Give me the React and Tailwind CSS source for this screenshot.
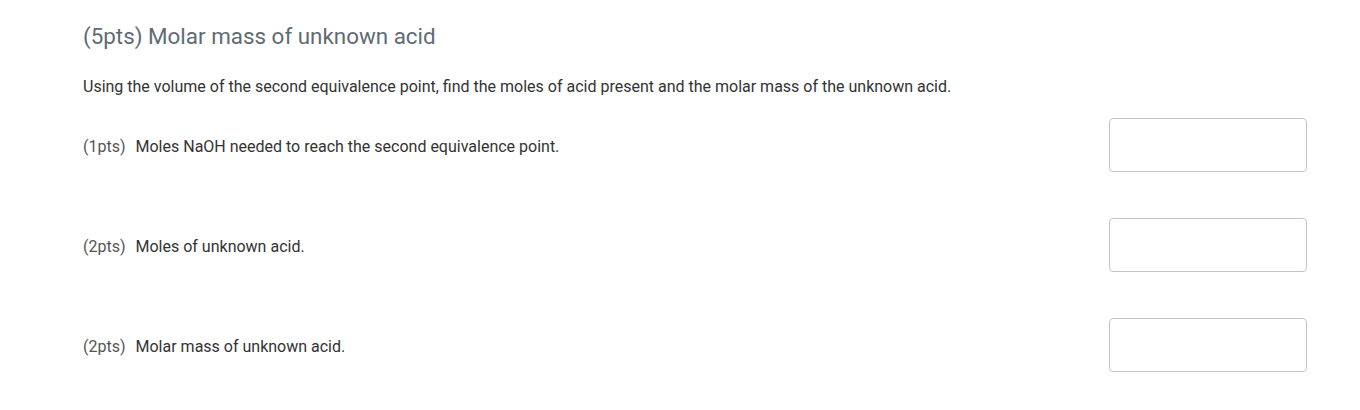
const rows = [
  { pts: "(1pts)", text: "Moles NaOH needed to reach the second equivalence point." },
  { pts: "(2pts)", text: "Moles of unknown acid." },
  { pts: "(2pts)", text: "Molar mass of unknown acid." },
];

export default function App() {
  return (
    <div
      className="bg-white min-h-[410px] pl-[83px] pr-[53px] pt-[21px]"
      style={{ fontFamily: "Roboto, 'Liberation Sans', sans-serif" }}
    >
      <h2 className="text-[22.4px] leading-[30px] text-[#5f6b73]">(5pts) Molar mass of unknown acid</h2>
      <p className="mt-[25px] text-[16px] leading-[22px] text-[#333]">
        Using the volume of the second equivalence point, find the moles of acid present and the molar mass of the unknown acid.
      </p>
      <div className="mt-[20px] flex flex-col gap-[46px]">
        {rows.map((r, i) => (
          <div key={i} className="flex items-center justify-between">
            <div className="text-[16px] leading-[22px] text-[#333] pt-[4px]">
              <span className="text-[#555]">{r.pts}</span>
              <span className="ml-[10px]">{r.text}</span>
            </div>
            <input
              type="text"
              className="w-[198px] h-[54px] border border-[#c4c4c4] rounded-[4px] bg-white outline-none"
            />
          </div>
        ))}
      </div>
    </div>
  );
}
